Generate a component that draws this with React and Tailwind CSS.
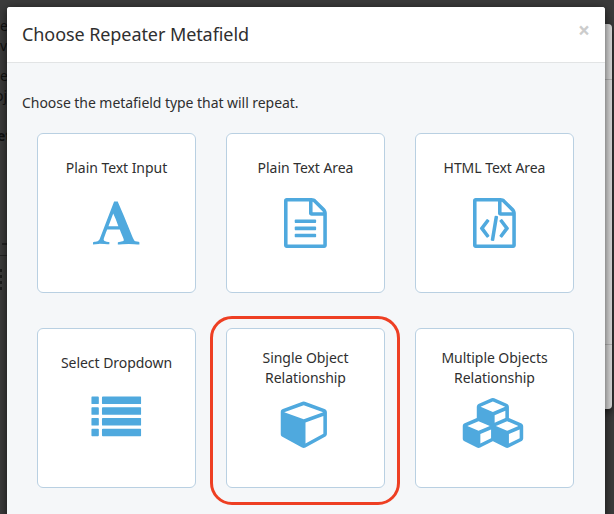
const FILE_OUTLINE =
  'M1468 380q28 28 48 76t20 88v1152q0 40-28 68t-68 28h-1344q-40 0-68-28t-28-68v-1600q0-40 28-68t68-28h896q40 0 88 20t76 48zm-444-244v376h376q-10-29-22-41l-313-313q-12-12-41-22zm384 1528v-1024h-416q-40 0-68-28t-28-68v-416h-768v1536h1280z';

const icons = {
  font: {
    width: 1664,
    shift: '',
    d: 'M725 559l-170 450q33 0 136.5 2t160.5 2q19 0 57-2-87-253-184-452zm-725 1105l2-79q23-7 56-12.5t57-10.5 49.5-14.5 44.5-29 31-50.5l237-616 280-724h128q8 14 11 21l205 480q33 78 106 257.5t114 274.5q15 34 58 144.5t72 168.5q20 45 35 57 19 15 88 29.5t84 20.5q6 38 6 57 0 4-.5 13t-.5 13q-63 0-190-8t-191-8q-76 0-215 7t-178 8q0-43 4-78l131-28q1 0 12.5-2.5t15.5-3.5 14.5-4.5 15-6.5 11-8 9-11 2.5-14q0-16-31-96.5t-72-177.5-42-100l-450-2q-26 58-76.5 195.5t-50.5 162.5q0 22 14 37.5t43.5 24.5 48.5 13.5 57 8.5 41 4q1 19 1 58 0 9-2 27-58 0-174.5-10t-174.5-10q-8 0-26.5 4t-21.5 4q-80 14-188 14z',
  },
  fileText: {
    width: 1536,
    shift: '',
    d:
      FILE_OUTLINE +
      'M384 800q0-14 9-23t23-9h704q14 0 23 9t9 23v64q0 14-9 23t-23 9h-704q-14 0-23-9t-9-23v-64zm736 224q14 0 23 9t9 23v64q0 14-9 23t-23 9h-704q-14 0-23-9t-9-23v-64q0-14 9-23t23-9h704zm0 256q14 0 23 9t9 23v64q0 14-9 23t-23 9h-704q-14 0-23-9t-9-23v-64q0-14 9-23t23-9h704z',
  },
  fileCode: {
    width: 1536,
    shift: '',
    d:
      FILE_OUTLINE +
      'M480 768q8-11 21-12.5t24 6.5l51 38q11 8 12.5 21t-6.5 24l-182 243 182 243q8 11 6.5 24t-12.5 21l-51 38q-11 8-24 6.5t-21-12.5l-226-301q-14-19 0-38zm802 301q14 19 0 38l-226 301q-8 11-21 12.5t-24-6.5l-51-38q-11-8-12.5-21t6.5-24l182-243-182-243q-8-11-6.5-24t12.5-21l51-38q11-8 24-6.5t21 12.5zm-620 461q-13-2-20.5-13t-5.5-24l138-831q2-13 13-20.5t24-5.5l63 10q13 2 20.5 13t5.5 24l-138 831q-2 13-13 20.5t-24 5.5z',
  },
  list: {
    width: 1792,
    shift: '-translate-x-[0.75px] -translate-y-[0.5px]',
    d: [144, 528, 912, 1296]
      .map(
        (y) =>
          `M32 ${y}h208q32 0 32 32v208q0 32-32 32h-208q-32 0-32-32v-208q0-32 32-32zM416 ${y}h1344q32 0 32 32v208q0 32-32 32h-1344q-32 0-32-32v-208q0-32 32-32z`
      )
      .join(''),
  },
  cube: {
    width: 1664,
    shift: '-translate-x-[1.5px] translate-y-[1px]',
    d: 'M896 1629l640-349v-636l-640 233v752zm-64-865l698-254-698-254-698 254zm832-252v768q0 35-18 65t-49 47l-704 384q-28 16-61 16t-61-16l-704-384q-31-17-49-47t-18-65v-768q0-40 23-73t61-47l704-256q22-8 44-8t44 8l704 256q38 14 61 47t23 73z',
  },
  cubes: {
    width: 2304,
    shift: 'translate-x-[0.5px] translate-y-[1px]',
    d: 'M640 1632l384-192v-314l-384 164v342zm-64-454l404-173-404-173-404 173zm1088 454l384-192v-314l-384 164v342zm-64-454l404-173-404-173-404 173zm-448-293l384-165v-266l-384 164v267zm-64-379l441-189-441-189-441 189zm1088 518v416q0 36-19 67t-52 47l-448 224q-25 14-57 14t-57-14l-448-224q-5-2-7-4-2 2-7 4l-448 224q-25 14-57 14t-57-14l-448-224q-33-16-52-47t-19-67v-416q0-38 21.5-70t56.5-48l434-186v-400q0-38 21.5-70t56.5-48l448-192q23-10 50-10t50 10l448 192q35 16 56.5 48t21.5 70v400l434 186q36 16 57 48t21 70z',
  },
};

function Icon({ name }) {
  const { width, shift, d } = icons[name];
  return (
    <svg
      viewBox={`0 0 ${width} 1792`}
      width={(width * 50) / 1792}
      height="50"
      className={`block shrink-0 fill-[#4fa9de] ${shift}`}
      aria-hidden="true"
    >
      <path d={d} />
    </svg>
  );
}

const types = [
  { lines: ['Plain Text Input'], icon: 'font' },
  { lines: ['Plain Text Area'], icon: 'fileText' },
  { lines: ['HTML Text Area'], icon: 'fileCode' },
  { lines: ['Select Dropdown'], icon: 'list' },
  { lines: ['Single Object', 'Relationship'], icon: 'cube', highlighted: true },
  { lines: ['Multiple Objects', 'Relationship'], icon: 'cubes' },
];

function TypeCard({ lines, icon, highlighted }) {
  const twoLines = lines.length > 1;
  return (
    <button
      type="button"
      className={`relative flex h-40 flex-col items-center rounded-[6px] border border-[#b9d0e2] bg-white text-[14px] leading-5 tracking-[-0.05px] ${
        twoLines ? 'gap-[9px] pt-[19px]' : 'gap-[20px] pt-6'
      }`}
    >
      <span className="whitespace-nowrap">
        {lines.map((line) => (
          <span key={line} className="block">
            {line}
          </span>
        ))}
      </span>
      <Icon name={icon} />
      {highlighted && (
        <span className="absolute -top-[13px] -left-[17px] h-[189px] w-[190px] rounded-[22px] border-3 border-[#ee3f23]" />
      )}
    </button>
  );
}

function PageBehind() {
  return (
    <div className="absolute inset-0 text-[14px] leading-5 text-[#111]" aria-hidden="true">
      <div className="absolute top-[16px] left-0 flex flex-col items-start">
        <span>e</span>
        <span>v</span>
        <span className="mt-[10px]">e</span>
        <span className="-ml-[5px]">oj</span>
        <span className="mt-5 -ml-[3px] font-bold">et</span>
      </div>
      <div className="absolute top-[243px] left-[2px] h-[2px] w-[5px] bg-[#222]" />
      <div className="absolute top-[255px] left-0 h-px w-[7px] bg-[#242424]" />
      <div className="absolute top-[269px] left-0 flex flex-col gap-[3px]">
        <i className="h-[3px] w-[2px] bg-[#1c1c1c]" />
        <i className="h-[3px] w-[2px] bg-[#1c1c1c]" />
        <i className="h-[3px] w-[2px] bg-[#1c1c1c]" />
        <i className="h-[3px] w-[2px] bg-[#1c1c1c]" />
      </div>
      <div className="absolute top-[24px] left-[500px] h-[385px] w-[112px] rounded-[4px] bg-[#d6d6d6] shadow-[0_3px_9px_rgba(0,0,0,0.6)]">
        <div className="mt-[55px] h-[266px] border-y border-[#b4b4b4]" />
      </div>
    </div>
  );
}

export default function App() {
  return (
    <div className="relative h-[514px] w-[614px] overflow-hidden bg-[#3b3b3b] pt-[7px] pl-[7px] font-['Noto_Sans','Open_Sans',sans-serif] text-[#2f2f2f]">
      <PageBehind />
      <div className="relative h-[540px] w-[598px] overflow-hidden rounded-[3px] bg-[#f5f7f9] shadow-[0_2px_10px_rgba(0,0,0,0.65)]">
        <header className="flex h-14 items-start justify-between border-b border-[#e2e4e5] bg-white pr-[15px] pl-[15px]">
          <h1 className="pt-[15px] text-[18px] leading-[25px] tracking-[-0.08px]">
            Choose Repeater Metafield
          </h1>
          <button type="button" className="pt-[13px] text-[21px] leading-5 font-bold text-[#ccc]">
            ×
          </button>
        </header>
        <p className="pt-[30px] pl-[15px] text-[14px] leading-5 tracking-[-0.05px]">
          Choose the metafield type that will repeat.
        </p>
        <div className="mt-5 ml-[30px] grid w-[537px] grid-cols-3 gap-x-[30px] gap-y-[35px]">
          {types.map((type) => (
            <TypeCard key={type.lines.join(' ')} {...type} />
          ))}
        </div>
      </div>
    </div>
  );
}
